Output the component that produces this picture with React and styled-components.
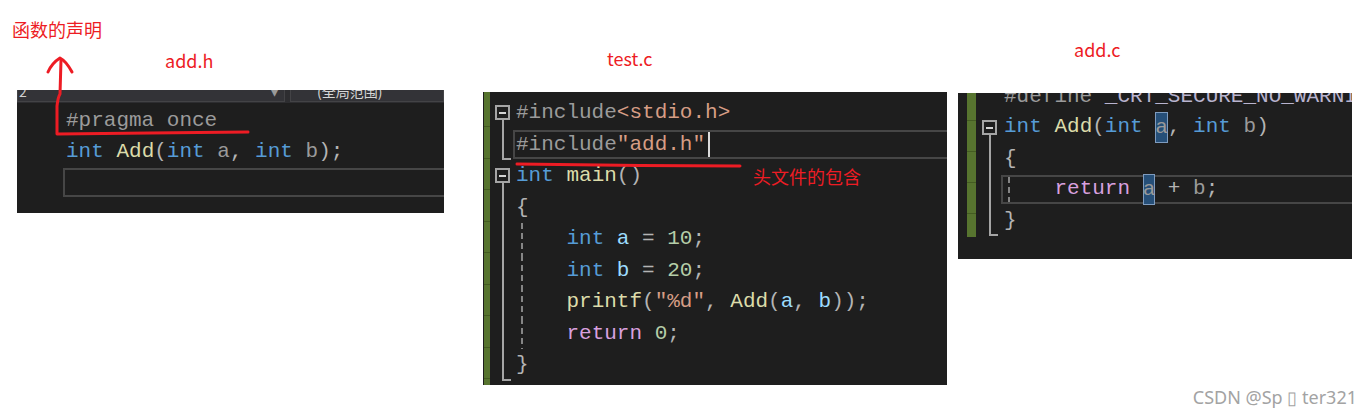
import styled, { createGlobalStyle } from "styled-components";

const C = {
  kw: "#569cd6",
  fn: "#dcdcaa",
  pun: "#b4b4b4",
  pre: "#9b9b9b",
  str: "#d69d85",
  num: "#b5cea8",
  ctl: "#d8a0df",
  loc: "#9cdcfe",
  par: "#9a9a9a",
  mac: "#b9b4cf",
};

const RED = "#ed1c24";

const Global = createGlobalStyle`
  body {
    margin: 0;
    background: #ffffff;
    font-family: "Noto Sans", sans-serif;
  }
`;

const Canvas = styled.div`
  position: relative;
  width: 1369px;
  height: 418px;
  background: #ffffff;
  overflow: hidden;
`;

const Row = styled.div`
  display: flex;
  align-items: flex-start;
  padding-left: 17px;
`;

const Column = styled.div`
  display: flex;
  flex-direction: column;
  flex-shrink: 0;
  width: ${(p) => p.$width}px;
  margin-top: ${(p) => p.$top}px;
  margin-left: ${(p) => p.$left || 0}px;
`;

const Label = styled.div`
  height: 22px;
  line-height: 22px;
  margin-left: ${(p) => p.$x}px;
  margin-bottom: ${(p) => p.$gap}px;
  font-family: "Noto Sans CJK SC", sans-serif;
  font-size: 18px;
  color: ${RED};
`;

const Panel = styled.div`
  display: flex;
  flex-direction: column;
  height: ${(p) => p.$h}px;
  background: #1e1e1e;
  overflow: hidden;
`;

const NavBar = styled.div`
  display: flex;
  flex-shrink: 0;
  height: 13px;
  background: #2d2d30;
`;

const NavBox = styled.div`
  display: flex;
  justify-content: space-between;
  box-sizing: border-box;
  width: ${(p) => (p.$w ? `${p.$w}px` : "auto")};
  flex: ${(p) => (p.$w ? "none" : 1)};
  height: 12px;
  margin-left: ${(p) => p.$ml || 0}px;
  padding: 0 6px 0 ${(p) => p.$pad || 1}px;
  background: #333337;
  border: 1px solid #434346;
  border-top: none;
  overflow: hidden;
`;

const NavText = styled.span`
  margin-top: -8px;
  font-family: "Noto Sans CJK SC", sans-serif;
  font-size: 14px;
  line-height: 18px;
  color: ${(p) => p.$c || "#d6d6d6"};
  white-space: nowrap;
`;

const Body = styled.div`
  display: flex;
  align-items: flex-start;
  flex: 1;
  min-height: 0;
`;

const Side = styled.div`
  flex-shrink: 0;
  align-self: ${(p) => (p.$h ? "flex-start" : "stretch")};
  height: ${(p) => (p.$h ? `${p.$h}px` : "auto")};
  width: ${(p) => p.$w}px;
  margin-left: ${(p) => p.$ml}px;
  background-color: #57742f;
  background-image: repeating-linear-gradient(
    to bottom,
    transparent 0 ${(p) => p.$lh - 1}px,
    #445c22 ${(p) => p.$lh - 1}px ${(p) => p.$lh}px
  );
  background-position: 0 ${(p) => p.$off}px;
`;

const Lines = styled.div`
  display: flex;
  flex-direction: column;
  flex: 1;
  min-width: 0;
  margin-top: ${(p) => p.$top}px;
  padding-left: ${(p) => p.$pad || 0}px;
`;

const Line = styled.div`
  display: flex;
  flex-shrink: 0;
  height: ${(p) => p.$h}px;
`;

const Gutter = styled.div`
  display: flex;
  flex-direction: column;
  flex-shrink: 0;
  box-sizing: border-box;
  width: ${(p) => p.$w}px;
  padding-left: ${(p) => p.$pad}px;
`;

const Spacer = styled.div`
  flex: 1;
`;

const FoldBox = styled.div`
  display: flex;
  align-items: center;
  justify-content: center;
  box-sizing: border-box;
  width: 15px;
  height: 15px;
  border: 2px solid #a5a5a5;
`;

const Minus = styled.div`
  width: 7px;
  height: 2px;
  background: #d4d4d4;
`;

const Rail = styled.div`
  flex: 1;
  box-sizing: border-box;
  width: ${(p) => (p.$end ? 9 : 2)}px;
  margin-left: 7px;
  border-left: 2px solid #a5a5a5;
  border-bottom: ${(p) => (p.$end ? "2px solid #a5a5a5" : "none")};
`;

const Text = styled.div`
  display: flex;
  align-items: center;
  flex: 1;
  min-width: 0;
  box-sizing: border-box;
  font-family: "Liberation Mono", monospace;
  font-size: 21px;
  color: #dcdcdc;
  white-space: pre;
  ${(p) =>
    p.$current &&
    `
    margin: 1px 0 1px -3px;
    padding-left: 1px;
    border: 2px solid #464646;
    border-right: none;
  `}
  ${(p) =>
    p.$guide &&
    `
    background-image: repeating-linear-gradient(to bottom, #858585 0 6px, transparent 6px 10px);
    background-size: 2px 100%;
    background-position: 5px 0;
    background-repeat: no-repeat;
  `}
`;

const Code = styled.span`
  line-height: 29px;
`;

const T = styled.span`
  color: ${(p) => p.$c};
`;

const Mark = styled.span`
  display: inline-block;
  height: 31px;
  line-height: 31px;
  vertical-align: top;
  color: ${C.par};
  background: #264f78;
  box-shadow: inset 0 0 0 1px #7f9cbf;
`;

const Caret = styled.span`
  display: inline-block;
  width: 2px;
  height: 25px;
  margin-left: 3px;
  vertical-align: middle;
  background: #dcdcdc;
`;

const Note = styled.div`
  position: absolute;
  left: ${(p) => p.$x}px;
  top: ${(p) => p.$y}px;
  font-family: "Noto Sans CJK SC", sans-serif;
  font-size: 18px;
  line-height: 22px;
  color: ${RED};
  white-space: nowrap;
`;

const Marks = styled.svg`
  position: absolute;
  left: 0;
  top: 0;
  pointer-events: none;
`;

const Watermark = styled.div`
  position: absolute;
  right: 12px;
  bottom: 10px;
  font-family: "Noto Sans", sans-serif;
  font-size: 18px;
  line-height: 22px;
  color: #a3a3a3;
  white-space: nowrap;
`;

const Fold = ({ kind, w, pad }) => (
  <Gutter $w={w} $pad={pad}>
    {kind === "open" && (
      <>
        <Spacer />
        <FoldBox>
          <Minus />
        </FoldBox>
        <Rail />
      </>
    )}
    {kind === "line" && <Rail />}
    {kind === "end" && <Rail $end />}
  </Gutter>
);

const HeaderFile = () => (
  <Panel $h={123}>
    <NavBar>
      <NavBox $w={268}>
        <NavText $c="#cfcfcf">2</NavText>
        <NavText $c="#9a9a9a">▾</NavText>
      </NavBox>
      <NavBox $ml={5} $pad={26}>
        <NavText>(全局范围)</NavText>
      </NavBox>
    </NavBar>
    <Lines $top={1.5} $pad={49}>
      <Line $h={31}>
        <Text>
          <Code>
            <T $c={C.pre}>#pragma once</T>
          </Code>
        </Text>
      </Line>
      <Line $h={31}>
        <Text>
          <Code>
            <T $c={C.kw}>int</T> <T $c={C.fn}>Add</T>
            <T $c={C.pun}>(</T>
            <T $c={C.kw}>int</T>
            <T $c={C.par}> a</T>
            <T $c={C.pun}>, </T>
            <T $c={C.kw}>int</T>
            <T $c={C.par}> b</T>
            <T $c={C.pun}>);</T>
          </Code>
        </Text>
      </Line>
      <Line $h={31}>
        <Text $current>
          <Code> </Code>
        </Text>
      </Line>
    </Lines>
  </Panel>
);

const MainFile = () => {
  const lh = 31.5;
  const g = { w: 26, pad: 5 };
  return (
    <Panel $h={293}>
      <Body>
        <Side $w={6} $ml={1} $lh={lh} $off={4} />
        <Lines $top={5}>
          <Line $h={lh}>
            <Fold kind="open" {...g} />
            <Text>
              <Code>
                <T $c={C.pre}>#include</T>
                <T $c={C.str}>&lt;stdio.h&gt;</T>
              </Code>
            </Text>
          </Line>
          <Line $h={lh}>
            <Fold kind="end" {...g} />
            <Text $current>
              <Code>
                <T $c={C.pre}>#include</T>
                <T $c={C.str}>"add.h"</T>
                <Caret />
              </Code>
            </Text>
          </Line>
          <Line $h={lh}>
            <Fold kind="open" {...g} />
            <Text>
              <Code>
                <T $c={C.kw}>int</T> <T $c={C.fn}>main</T>
                <T $c={C.pun}>()</T>
              </Code>
            </Text>
          </Line>
          <Line $h={lh}>
            <Fold kind="line" {...g} />
            <Text>
              <Code>
                <T $c={C.pun}>{"{"}</T>
              </Code>
            </Text>
          </Line>
          <Line $h={lh}>
            <Fold kind="line" {...g} />
            <Text $guide>
              <Code>
                {"    "}
                <T $c={C.kw}>int</T> <T $c={C.loc}>a</T>
                <T $c={C.pun}> = </T>
                <T $c={C.num}>10</T>
                <T $c={C.pun}>;</T>
              </Code>
            </Text>
          </Line>
          <Line $h={lh}>
            <Fold kind="line" {...g} />
            <Text $guide>
              <Code>
                {"    "}
                <T $c={C.kw}>int</T> <T $c={C.loc}>b</T>
                <T $c={C.pun}> = </T>
                <T $c={C.num}>20</T>
                <T $c={C.pun}>;</T>
              </Code>
            </Text>
          </Line>
          <Line $h={lh}>
            <Fold kind="line" {...g} />
            <Text $guide>
              <Code>
                {"    "}
                <T $c={C.fn}>printf</T>
                <T $c={C.pun}>(</T>
                <T $c={C.str}>"%d"</T>
                <T $c={C.pun}>, </T>
                <T $c={C.fn}>Add</T>
                <T $c={C.pun}>(</T>
                <T $c={C.loc}>a</T>
                <T $c={C.pun}>, </T>
                <T $c={C.loc}>b</T>
                <T $c={C.pun}>));</T>
              </Code>
            </Text>
          </Line>
          <Line $h={lh}>
            <Fold kind="line" {...g} />
            <Text $guide>
              <Code>
                {"    "}
                <T $c={C.ctl}>return</T> <T $c={C.num}>0</T>
                <T $c={C.pun}>;</T>
              </Code>
            </Text>
          </Line>
          <Line $h={lh}>
            <Fold kind="end" {...g} />
            <Text>
              <Code>
                <T $c={C.pun}>{"}"}</T>
              </Code>
            </Text>
          </Line>
        </Lines>
      </Body>
    </Panel>
  );
};

const SourceFile = () => {
  const lh = 31;
  const g = { w: 28, pad: 6 };
  return (
    <Panel $h={166}>
      <Body>
        <Side $w={9} $ml={9} $h={144} $lh={lh} $off={-3} />
        <Lines $top={-12}>
          <Line $h={lh}>
            <Fold kind="none" {...g} />
            <Text>
              <Code>
                <T $c={C.pre}>#define </T>
                <T $c={C.mac}>_CRT_SECURE_NO_WARNINGS</T>
              </Code>
            </Text>
          </Line>
          <Line $h={lh}>
            <Fold kind="open" {...g} />
            <Text>
              <Code>
                <T $c={C.kw}>int</T> <T $c={C.fn}>Add</T>
                <T $c={C.pun}>(</T>
                <T $c={C.kw}>int</T> <Mark>a</Mark>
                <T $c={C.pun}>, </T>
                <T $c={C.kw}>int</T>
                <T $c={C.par}> b</T>
                <T $c={C.pun}>)</T>
              </Code>
            </Text>
          </Line>
          <Line $h={lh}>
            <Fold kind="line" {...g} />
            <Text>
              <Code>
                <T $c={C.pun}>{"{"}</T>
              </Code>
            </Text>
          </Line>
          <Line $h={lh}>
            <Fold kind="line" {...g} />
            <Text $current $guide>
              <Code>
                {"    "}
                <T $c={C.ctl}>return</T> <Mark>a</Mark>
                <T $c={C.pun}> + </T>
                <T $c={C.par}>b</T>
                <T $c={C.pun}>;</T>
              </Code>
            </Text>
          </Line>
          <Line $h={lh}>
            <Fold kind="end" {...g} />
            <Text>
              <Code>
                <T $c={C.pun}>{"}"}</T>
              </Code>
            </Text>
          </Line>
        </Lines>
      </Body>
    </Panel>
  );
};

export default function App() {
  return (
    <>
      <Global />
      <Canvas>
        <Row>
          <Column $width={427} $top={49}>
            <Label $x={148} $gap={19}>
              add.h
            </Label>
            <HeaderFile />
          </Column>
          <Column $width={464} $top={47} $left={39}>
            <Label $x={124} $gap={23}>
              test.c
            </Label>
            <MainFile />
          </Column>
          <Column $width={394} $top={38} $left={11}>
            <Label $x={116} $gap={33}>
              add.c
            </Label>
            <SourceFile />
          </Column>
        </Row>

        <Marks width="1369" height="418" viewBox="0 0 1369 418">
          <g fill="none" stroke={RED} strokeWidth="3" strokeLinecap="round" strokeLinejoin="round">
            <path d="M248 132 L150 133 L57 134 L57 106 Q58 97 60 94 L61 60" />
            <path d="M48 72 Q52 63 60 58 Q66 61 72 72" />
            <path d="M517 164 L600 165 L640 165.5 L740 166" />
          </g>
        </Marks>

        <Note $x={12} $y={18}>函数的声明</Note>
        <Note $x={753} $y={165}>头文件的包含</Note>
        <Watermark>CSDN @Sp {"\u25AF"} ter321</Watermark>
      </Canvas>
    </>
  );
}
